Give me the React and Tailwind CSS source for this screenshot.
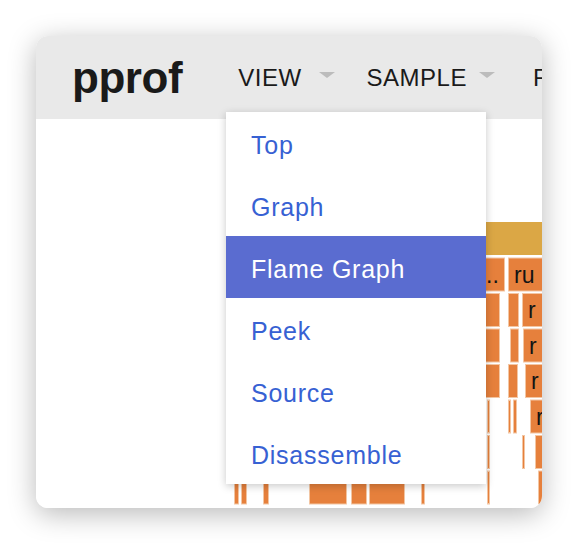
const ORANGE = '#e6803c';
const EDGE = '#f3c6a3';

// flame graph cells, coords inside the content area
const rowY = (i) => 103 + i * 35.5;
const rows = [
  // row 1
  [[194, 468, '..'], [472, 560, 'ru']],
  // row 2
  [[300, 463], [472, 482], [486, 560, 'r']],
  // row 3
  [[300, 463], [474, 482], [487, 560, 'r']],
  // row 4
  [[310, 463], [472, 481], [489, 560, 'r']],
  // row 5
  [[330, 340], [451, 453], [472, 474], [477, 480], [494, 560, 'r']],
  // row 6
  [[340, 350], [451, 453], [486, 488], [499, 560, 'r']],
  // row 7
  [
    [198, 202], [205, 210], [227, 232], [273, 310], [315, 330], [333, 368],
    [385, 388], [451, 453], [502, 560, 'r'],
  ],
];

function FlameGraph() {
  return (
    <svg width="506" height="389" viewBox="0 0 506 389" className="block">
      <rect x="194" y={rowY(0)} width="330" height="33" fill="#dba745" />
      {rows.map((cells, i) =>
        cells.map(([x1, x2, label], j) => (
          <g key={`${i}-${j}`}>
            <rect
              x={x1 + 0.5}
              y={rowY(i + 1) + 0.5}
              width={x2 - x1}
              height="33"
              fill={ORANGE}
              stroke={EDGE}
              strokeWidth="1"
            />
            {label && (
              <text
                x={label === '..' ? x2 - 18 : x1 + 6}
                y={rowY(i + 1) + 25}
                fontSize="23"
                fontFamily="'Liberation Sans', Arial, sans-serif"
                fill="#141414"
              >
                {label}
              </text>
            )}
          </g>
        ))
      )}
    </svg>
  );
}

function Caret() {
  return (
    <span className="mb-[6px] inline-block h-0 w-0 border-l-[8px] border-r-[8px] border-t-[6px] border-l-transparent border-r-transparent border-t-[#bcbcbc]" />
  );
}

const items = ['Top', 'Graph', 'Flame Graph', 'Peek', 'Source', 'Disassemble'];

export default function App() {
  return (
    <div className="h-[544px] w-[578px] bg-white p-[36px] font-['Liberation_Sans',Arial,sans-serif]">
      <div className="relative flex h-full w-full flex-col overflow-hidden rounded-[12px] bg-white shadow-[0_6px_28px_rgba(0,0,0,0.28)]">
        {/* Header */}
        <header className="flex h-[83px] shrink-0 items-center overflow-hidden whitespace-nowrap bg-[#e9e9e9] pl-[36px] text-[#1a1a1a]">
          <span className="text-[44px] font-bold leading-none tracking-[-0.01em]">pprof</span>
          <span className="ml-[56px] text-[24px] leading-none tracking-[0.5px]">VIEW</span>
          <span className="ml-[17px] flex items-center">
            <Caret />
          </span>
          <span className="ml-[32px] text-[24px] leading-none tracking-[0.5px]">SAMPLE</span>
          <span className="ml-[12px] flex items-center">
            <Caret />
          </span>
          <span className="ml-[38px] text-[24px] leading-none tracking-[0.5px]">R</span>
        </header>

        {/* Content */}
        <main className="flex-1 bg-white">
          <FlameGraph />
        </main>

        {/* Dropdown menu */}
        <ul className="absolute left-[190px] top-[76px] w-[260px] bg-white shadow-[0_2px_8px_rgba(0,0,0,0.22)]">
          {items.map((label) => (
            <li
              key={label}
              className={
                label === 'Flame Graph'
                  ? 'flex h-[62px] items-center bg-[#5a6cd0] pl-[25px] pt-[5px] text-[25px] tracking-[0.03em] text-white'
                  : 'flex h-[62px] items-center pl-[25px] pt-[5px] text-[25px] tracking-[0.03em] text-[#3761d3]'
              }
            >
              {label}
            </li>
          ))}
        </ul>
      </div>
    </div>
  );
}
